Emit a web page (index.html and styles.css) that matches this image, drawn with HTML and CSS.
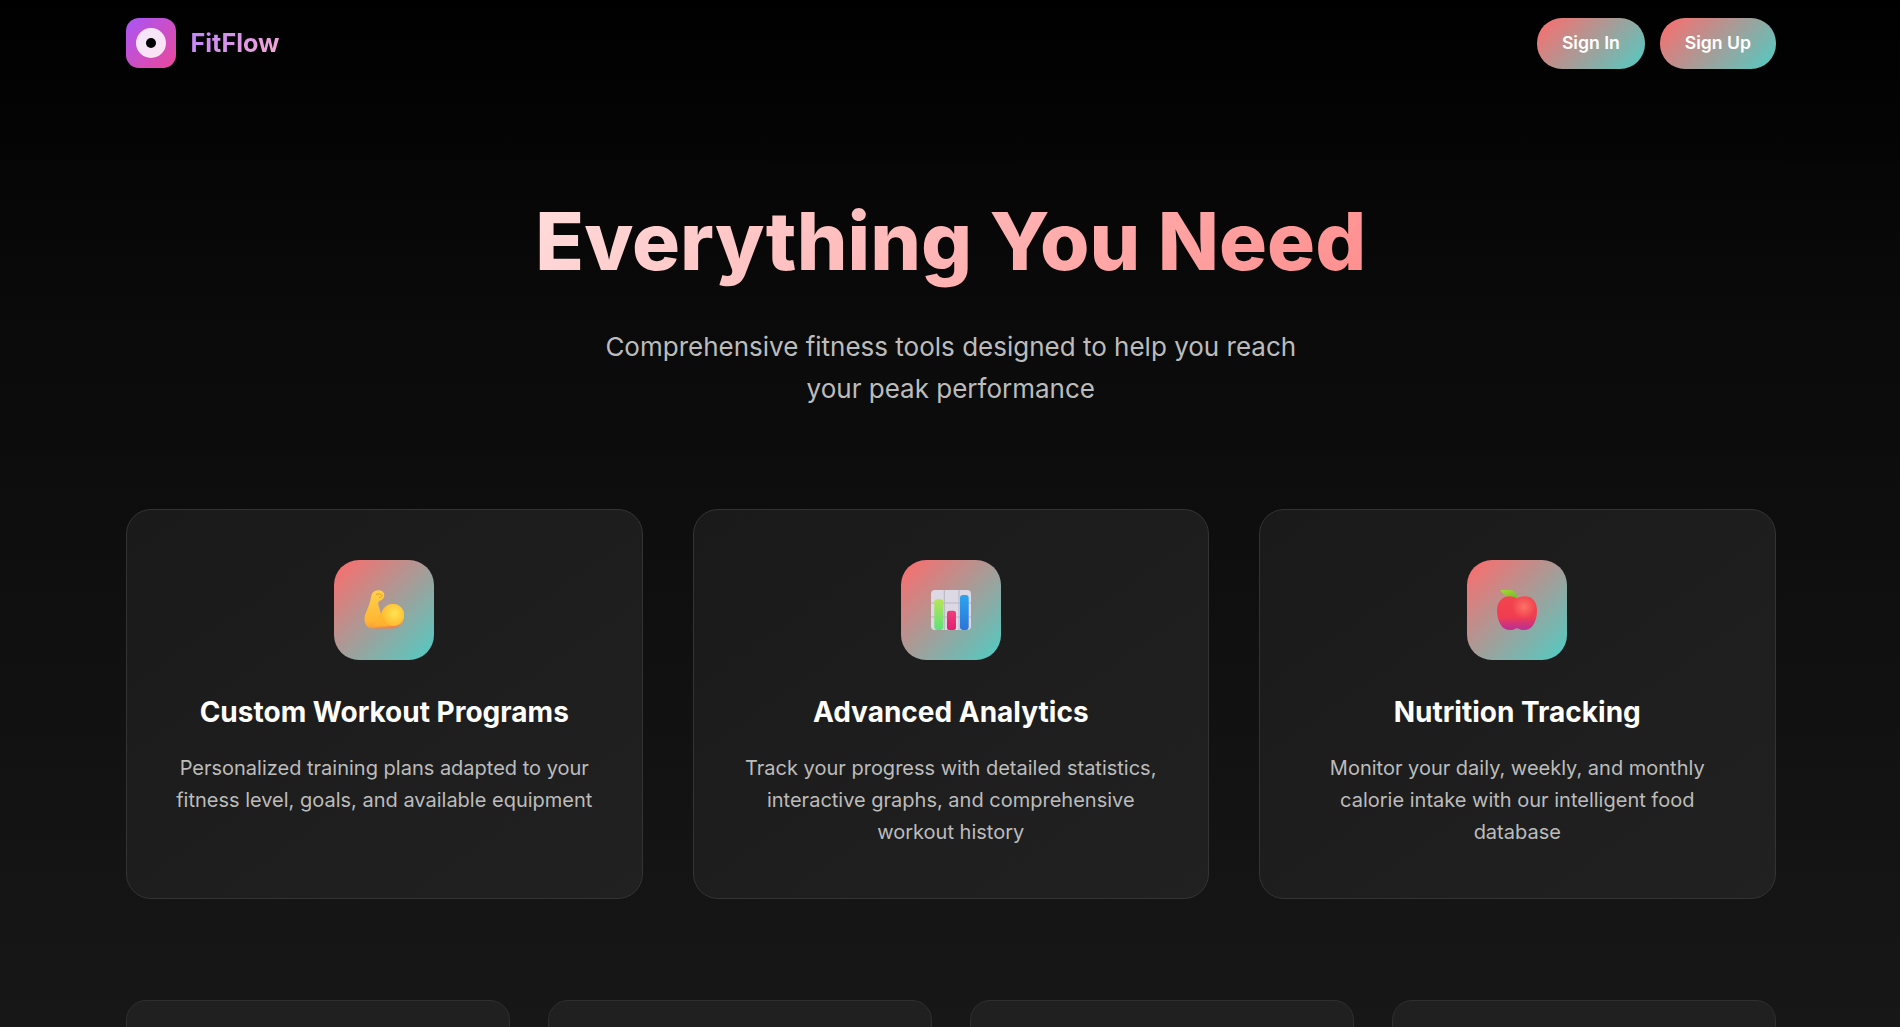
FILE: index.html
```html
<!DOCTYPE html>
<html lang="en">
<head>
<meta charset="utf-8">
<title>FitFlow</title>
<link rel="stylesheet" href="styles.css">
</head>
<body>
<svg class="defs" width="0" height="0" aria-hidden="true">
  <defs>
    <linearGradient id="armG" x1="0.3" y1="0" x2="0.45" y2="1"><stop offset="0" stop-color="#ffd04a"/><stop offset="0.75" stop-color="#ffb833"/><stop offset="0.92" stop-color="#f9a13a"/><stop offset="1" stop-color="#ee7f50"/></linearGradient>
    <radialGradient id="bicepG" cx="0.55" cy="0.42" r="0.6"><stop offset="0" stop-color="#ffe452"/><stop offset="1" stop-color="#ffb92f"/></radialGradient>
    <linearGradient id="barGreen" x1="0" y1="0" x2="0" y2="1"><stop offset="0" stop-color="#b5e655"/><stop offset="1" stop-color="#5fe07a"/></linearGradient>
    <linearGradient id="barPink" x1="0" y1="0" x2="0" y2="1"><stop offset="0" stop-color="#ee3f78"/><stop offset="1" stop-color="#e11f72"/></linearGradient>
    <linearGradient id="barBlue" x1="0" y1="0" x2="0" y2="1"><stop offset="0" stop-color="#2aa5f2"/><stop offset="1" stop-color="#2d74d8"/></linearGradient>
    <linearGradient id="appleG" x1="0" y1="0" x2="0" y2="1"><stop offset="0" stop-color="#f2464f"/><stop offset="0.62" stop-color="#f03c50"/><stop offset="0.82" stop-color="#d1347a"/><stop offset="1" stop-color="#bb2f92"/></linearGradient>
    <radialGradient id="appleHi" cx="0.5" cy="0.5" r="0.5"><stop offset="0" stop-color="#ff7a68" stop-opacity=".85"/><stop offset="1" stop-color="#ff7a68" stop-opacity="0"/></radialGradient>
    <linearGradient id="leafG" x1="0" y1="0" x2="1" y2="1"><stop offset="0" stop-color="#a6d834"/><stop offset="1" stop-color="#72b82e"/></linearGradient>
  </defs>
</svg>
<header class="topbar">
  <div class="brand">
    <span class="brand-mark"><span class="brand-ring"><span class="brand-dot"></span></span></span>
    <span class="brand-name">FitFlow</span>
  </div>
  <nav class="auth">
    <a class="pill" href="#">Sign In</a>
    <a class="pill" href="#">Sign Up</a>
  </nav>
</header>
<main class="features">
  <section class="hero">
    <h1 class="hero-title">Everything You Need</h1>
    <p class="hero-sub">Comprehensive fitness tools designed to help you reach your peak performance</p>
  </section>
  <section class="grid-three">
    <article class="card">
      <div class="card-icon">
        <svg class="emoji" viewBox="0 0 40 40">
          <path d="M7.500 5C8.500 1 13-.5 16.500.5c3 .8 4.500 3.500 3.500 6.500-.6 2-2.200 3-3.700 3.600-1.500.6-2.300 2-2 4L17 24c2-7 7-10 12-10 6 0 11 5 11 11.500C40 33 34.500 38.500 28 38.500H9C3.500 38.500.5 34 .5 29c0-2.500.6-4.500 1.500-6.500C4.500 17 6.500 11 7.500 5z" fill="url(#armG)"/>
          <circle cx="29.200" cy="25" r="11" fill="url(#bicepG)"/>
          <path d="M16.500 23.500l8.500 13H9.500c2.500-4 5-8.500 7-13z" fill="#ffb52e" opacity=".7"/>
          <path d="M12 4.500c2.500-1.200 5.500-.6 6 1.200.3 1.300-1 2-2.800 1.800" fill="none" stroke="#e8982a" stroke-width="1"/>
        </svg>
      </div>
      <h3 class="card-title">Custom Workout Programs</h3>
      <p class="card-text">Personalized training plans adapted to your fitness level, goals, and available equipment</p>
    </article>
    <article class="card">
      <div class="card-icon">
        <svg class="emoji" viewBox="0 0 40 40">
          <rect x="0" y="0" width="40" height="40" rx="4" fill="#dcd8e4"/>
          <path d="M13.300 0v40M28 0v40M0 13h40M0 27h40" stroke="#b8b4c2" stroke-width="1"/>
          <rect x="3.300" y="9.300" width="9" height="30.700" rx="3" fill="url(#barGreen)"/>
          <rect x="16" y="20.700" width="9" height="19.300" rx="2.500" fill="url(#barPink)"/>
          <rect x="29" y="5" width="8.700" height="35" rx="3" fill="url(#barBlue)"/>
        </svg>
      </div>
      <h3 class="card-title">Advanced Analytics</h3>
      <p class="card-text">Track your progress with detailed statistics, interactive graphs, and comprehensive workout history</p>
    </article>
    <article class="card">
      <div class="card-icon">
        <svg class="emoji" viewBox="0 0 40 40">
          <path d="M3.300 0h10c3.500 0 6 3 7.400 8.300-5 .7-9 .1-12.300-2.600C6.500 4 4.500 2 3.300 0z" fill="url(#leafG)"/>
          <path d="M20 8.500c3-2 6-2.500 10-2 6 .7 10 6 10 14 0 6-1.500 11.500-4.500 15.500-2 2.700-5 4-8.500 4-3 0-5-1-7-1.800-2 .8-4 1.800-7 1.800-3.500 0-6.500-1.300-8.500-4C1.500 32 0 26 0 20.500 0 12.500 4.500 7.500 10 6.500c4-.7 7 .2 10 2z" fill="url(#appleG)"/>
          <circle cx="27" cy="17" r="12" fill="url(#appleHi)"/>
        </svg>
      </div>
      <h3 class="card-title">Nutrition Tracking</h3>
      <p class="card-text">Monitor your daily, weekly, and monthly calorie intake with our intelligent food database</p>
    </article>
  </section>
  <section class="grid-four">
    <article class="mini"></article>
    <article class="mini"></article>
    <article class="mini"></article>
    <article class="mini"></article>
  </section>
</main>
</body>
</html>
```
FILE: styles.css
```css
* { box-sizing: border-box; margin: 0; padding: 0; }
html, body { height: 100%; overflow: hidden; }
body {
  font-family: Inter, "Liberation Sans", sans-serif;
  background: linear-gradient(180deg, #000 0%, #0a0a0a 30%, #171717 100%);
  color: #fff;
}
.defs { position: absolute; }
.topbar {
  width: 1650px;
  margin: 0 0 0 126px;
  height: 87px;
  padding-top: 18px;
  display: flex;
  align-items: flex-start;
  justify-content: space-between;
}
.brand { display: flex; align-items: center; gap: 14.500px; }
.brand-mark {
  width: 50px; height: 50px; border-radius: 13px;
  background: linear-gradient(135deg, #a855f7, #ec4899);
  display: flex; align-items: center; justify-content: center;
}
.brand-ring {
  width: 30px; height: 30px; border-radius: 50%;
  background: rgba(255, 255, 255, .85);
  display: flex; align-items: center; justify-content: center;
}
.brand-dot { width: 10px; height: 10px; border-radius: 50%; background: #000; }
.brand-name {
  font-size: 25.200px; font-weight: 700;
  background: linear-gradient(135deg, #c084fc, #f9a8d4);
  -webkit-background-clip: text; background-clip: text; color: transparent;
}
.auth { display: flex; gap: 15px; }
.pill {
  display: block;
  padding: 15px 25px 17px;
  border-radius: 25px;
  background: linear-gradient(135deg, #ff6b6b, #4ecdc4);
  color: #fff; text-decoration: none;
  font-size: 17.600px; font-weight: 600; line-height: 19px;
}
.features { width: 1649.500px; margin: 0 0 0 126px; }
.hero { text-align: center; padding-top: 105px; }
.hero-title {
  font-size: 80px; font-weight: 800; line-height: 97px;
  background: linear-gradient(135deg, #fff 0%, #ff6b6b 100%);
  -webkit-background-clip: text; background-clip: text; color: transparent;
}
.hero-sub {
  width: 720px; margin: 37px auto 0;
  font-size: 26px; line-height: 42px; color: #bcbcbc; font-weight: 400;
}
.grid-three {
  display: grid; grid-template-columns: repeat(3, 1fr); gap: 50px;
  margin-top: 99px;
}
.card {
  height: 390px;
  padding: 50px 40px;
  background: linear-gradient(145deg, #1a1a1a, #212121);
  border: 1px solid #333;
  border-radius: 25px;
  text-align: center;
}
.card-icon {
  width: 100px; height: 100px; border-radius: 25px; margin: 0 auto 35px;
  background: linear-gradient(135deg, #ff6b6b, #4ecdc4);
  display: flex; align-items: center; justify-content: center;
}
.emoji { width: 40px; height: 40px; display: block; }
.card-title { font-size: 28px; font-weight: 700; line-height: 35px; margin-bottom: 22px; color: #fff; }
.card-text { font-size: 20px; line-height: 32px; color: #bcbcbc; }
.grid-four {
  display: grid; grid-template-columns: repeat(4, 1fr); gap: 38.400px;
  margin-top: 101px;
}
.mini {
  height: 200px;
  background: #202020;
  border: 1px solid #2f2f2f;
  border-radius: 20px;
}
```
